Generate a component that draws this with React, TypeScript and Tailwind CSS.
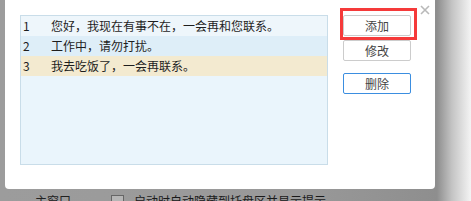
const cjkFont = '"Microsoft YaHei", "Noto Sans CJK SC", "Noto Sans", sans-serif';

const replies = [
  { id: 1, text: "您好，我现在有事不在，一会再和您联系。", tone: "bg-[#eef6fb]" },
  { id: 2, text: "工作中，请勿打扰。", tone: "bg-[#deeef8]" },
  { id: 3, text: "我去吃饭了，一会再联系。", tone: "bg-[#f3ead0]" },
];

export default function App() {
  return (
    <div
      className="h-[201px] w-[471px] overflow-hidden bg-[linear-gradient(to_right,#9c9c9c_0px,#999999_300px,#8e8e8e_437px,#c4c4c4_452px,#f4f4f4_471px)]"
      style={{ fontFamily: cjkFont }}
    >
      <div className="flex h-[201px] w-[471px] flex-col">
        <div className="relative mt-[-3px] ml-[5px] h-[192px] w-[430px] shrink-0 rounded-[4px] bg-white">
          <div className="flex pt-[18px] pl-[15px]">
            <ReplyList />
            <div className="relative ml-[15px] flex flex-col">
              <div className="pointer-events-none absolute top-[-7px] left-[-3px] h-[32px] w-[77px] border-[3px] border-[#f53a3a]" />
              <ActionButton label="添加" />
              <div className="mt-[4px]">
                <ActionButton label="修改" />
              </div>
              <div className="mt-[12px]">
                <ActionButton label="删除" focused />
              </div>
            </div>
            <button type="button" className="mt-[-10px] ml-[9px] flex h-[10px] w-[10px] items-center justify-center">
              <svg width="10" height="10" viewBox="0 0 10 10" aria-hidden>
                <path d="M1 1 L9 9 M9 1 L1 9" stroke="#b9b9b9" strokeWidth="1.6" />
              </svg>
            </button>
          </div>
        </div>

        <div className="mt-[4px] flex items-start pl-[35px] text-[12px] leading-[16px] text-[#222]">
          <span>主窗口</span>
          <span className="mt-[2px] ml-[40px] h-[13px] w-[13px] border border-[#666] bg-[#b5b5b5]" />
          <span className="ml-[10px] text-[#1a1a1a]">启动时自动隐藏到托盘区并显示提示</span>
        </div>
      </div>
    </div>
  );
}

function ReplyList() {
  return (
    <div className="h-[150px] w-[308px] border border-[#c9dde9] bg-[#eaf5fc]">
      {replies.map((reply) => (
        <div
          key={reply.id}
          className={`flex h-[20px] items-center pl-[2px] text-[12px] text-[#1e1e1e] ${reply.tone}`}
        >
          <span className="w-[28px]">{reply.id}</span>
          <span>{reply.text}</span>
        </div>
      ))}
    </div>
  );
}

function ActionButton({ label, focused = false }: { label: string; focused?: boolean }) {
  return (
    <button
      type="button"
      className={`flex h-[21px] w-[68px] items-center justify-center rounded-[2px] border bg-white text-[12px] text-[#444] ${
        focused ? "border-[#3b8ee0]" : "border-[#cccccc]"
      }`}
    >
      {label}
    </button>
  );
}
